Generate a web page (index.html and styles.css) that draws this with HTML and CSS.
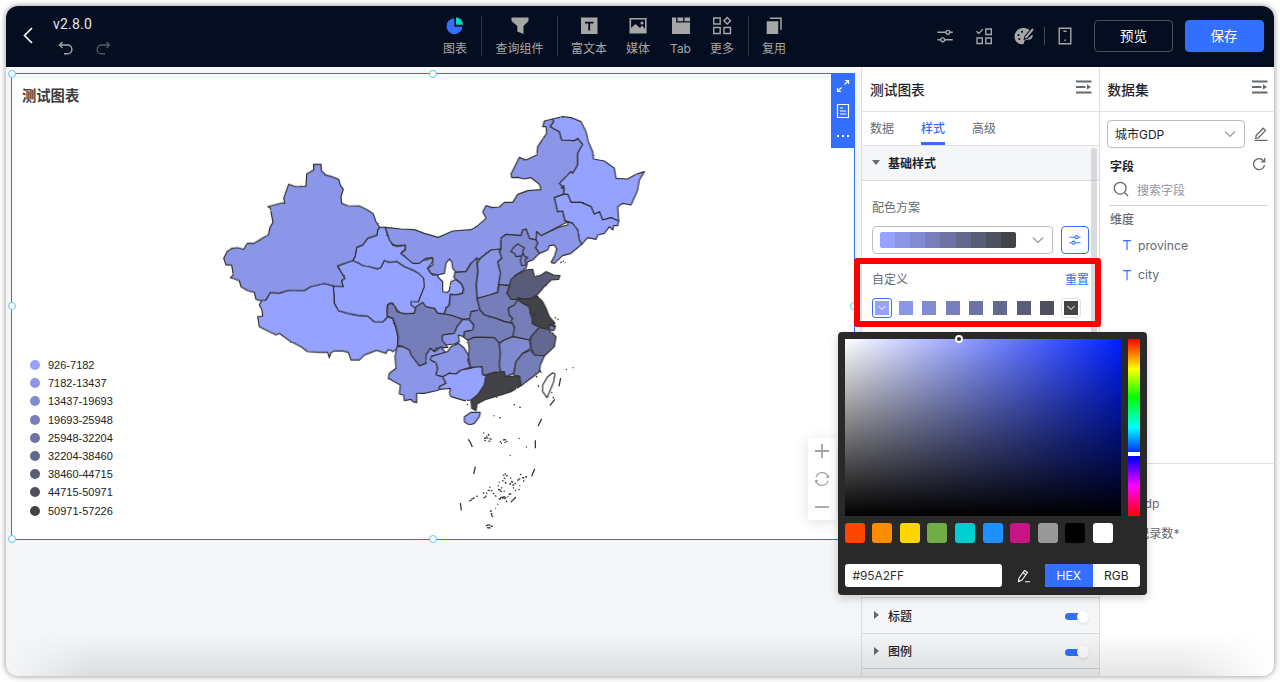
FILE: index.html
```html
<!DOCTYPE html>
<html lang="zh-CN">
<head>
<meta charset="utf-8">
<title>v2.8.0</title>
<link rel="stylesheet" href="styles.css">
</head>
<body>
<div class="window">
  <header class="topbar">
    <svg class="back" width="12" height="18" viewBox="0 0 12 18"><path d="M10 2 2.500 9.500 10 17"/></svg>
    <div class="file">
      <div class="file-name">v2.8.0</div>
      <div class="history">
        <svg width="16" height="15" viewBox="0 0 16 15"><path d="M4.500 1 1.500 4l3 3M2 4h7.500a4.200 4.200 0 0 1 0 8.800H6"/></svg>
        <svg class="dim" width="16" height="15" viewBox="0 0 16 15"><path d="M11.500 1l3 3-3 3M14 4H6.500a4.200 4.200 0 0 0 0 8.800H10"/></svg>
      </div>
    </div>
    <nav class="tools">
      <div class="tool w1"><svg width="20" height="20" viewBox="0 0 20 20"><path fill="#3370ff" d="M9.300 2.200a8 8 0 1 0 8.200 8.500H9.300z"/><path fill="#00d6b9" d="M11 1.200a7.500 7.500 0 0 1 7 7.600h-7z"/></svg><span>图表</span></div>
      <i class="sep"></i>
      <div class="tool w2"><svg width="20" height="20" viewBox="0 0 20 20"><path fill="#a6a6a6" d="M1.500 1.500h17v3.600l-5 5V18L7.300 15.600V10.100l-5.800-5z"/></svg><span>查询组件</span></div>
      <i class="sep"></i>
      <div class="tool w3"><svg width="20" height="20" viewBox="0 0 20 20"><path fill="#a6a6a6" d="M2 1.500h16.500V18H2z"/><path fill="none" stroke="#050e21" stroke-width="1.800" d="M6 6.700h8.500M10.200 6.500v8"/></svg><span>富文本</span></div>
      <div class="tool w4"><svg width="20" height="20" viewBox="0 0 20 20"><path fill="none" stroke="#a6a6a6" stroke-width="1.600" d="M2.300 2.800h15.500v14H2.300z"/><path fill="#a6a6a6" d="M3 12l4.500-4 4.500 4 2-2.500 3.500 4V17H3z"/><circle cx="14" cy="7" r="1.500" fill="#a6a6a6"/></svg><span>媒体</span></div>
      <div class="tool w5"><svg width="20" height="20" viewBox="0 0 20 20"><path fill="#a6a6a6" d="M1 1.500h4.200v5H19V18H1zM6.500 1.500h5.700v3.700H6.500zM13.500 1.500H19v3.700h-5.500z"/></svg><span>Tab</span></div>
      <div class="tool w6"><svg width="20" height="20" viewBox="0 0 20 20"><path fill="none" stroke="#a6a6a6" stroke-width="1.400" d="M1.700 2h6.500v6H1.700zM1.700 11.500h6.500v6H1.700zM12 11.500h6.500v6H12zM15.200 1.500l3.300 3.300-3.300 3.300-3.300-3.300z"/></svg><span>更多</span></div>
      <i class="sep"></i>
      <div class="tool w7"><svg width="20" height="20" viewBox="0 0 20 20"><path fill="#a6a6a6" d="M2.700 5.200h11.500V18H2.700z"/><path fill="none" stroke="#a6a6a6" stroke-width="1.500" d="M6 2.300h11v11.500"/></svg><span>复用</span></div>
    </nav>
    <div class="actions">
      <svg width="18" height="18" viewBox="0 0 18 18"><path d="M1.500 5.300h8.300M13.800 5.300h3M1.500 12.800h3.200M8.700 12.800h8"/><circle cx="11.800" cy="5.300" r="1.900"/><circle cx="6.700" cy="12.800" r="1.900"/></svg>
      <svg width="18" height="18" viewBox="0 0 18 18"><path d="M1.500 4.300l2.300 2.300 4-4.500M10.800 2h5.500v5.500h-5.500zM2 11h5.300v5.500H2zM10.800 11h5.500v5.500h-5.500z"/></svg>
      <svg width="20" height="18" viewBox="0 0 20 18"><path class="solid" d="M9 1C4.500 1 .5 4.800.5 9.500S4 17.300 8 17.300c2.500 0 2-2.200 2.500-3.500s3-.8 4.500-1.100c3-.5 4-2.700 3.500-5.200L13.500 12l-4 1 1-4L15.500 3C13.500 1.500 11 1 9 1z"/><path class="brush" d="M11.500 11l7.500-9"/><circle class="hole" cx="4.500" cy="8" r="1.100"/><circle class="hole" cx="8" cy="4.800" r="1.100"/><circle class="hole" cx="5.300" cy="12" r="1.100"/></svg>
      <i class="sep"></i>
      <svg width="16" height="18" viewBox="0 0 16 18"><path d="M2.200 1.300h11.600v15.500H2.200zM6.500 4.200h3M7.300 13.300h1.500"/></svg>
      <button class="btn ghost">预览</button>
      <button class="btn primary">保存</button>
    </div>
  </header>

  <main class="work">
    <section class="stage">
      <div class="chart">
        <h2 class="chart-title">测试图表</h2>
        <svg class="map" width="450" height="430" viewBox="0 0 1350 1290">
          <defs><filter id="coast" x="0" y="0" width="100%" height="100%"><feTurbulence type="fractalNoise" baseFrequency="0.200" numOctaves="2" seed="4"/><feDisplacementMap in="SourceGraphic" scale="5" xChannelSelector="R" yChannelSelector="G"/></filter></defs>
          <g class="land" filter="url(#coast)">
            <g transform="translate(480 405)">
              <path class="c1" d="M26-38 43-38 50-15 65 15 80 20 103 15 103 27 90 40 110 55 135 70 145 58 165 60 185 52 185 65 170 85 185 105 202 103 200 110 215 125 215 155 230 157 235 150 240 125 255 118 270 130 278 145 275 160 255 165 238 163 235 195 225 205 220 222 200 220 190 205 150 225 100 210 100 180 142 185 158 140 145 102 125 90 100 80 78 65 55 67 40 62 30 82 20 87-5 80-25 77-55 62-47 48-43 22-25 15-10-5 18-15 20-30z"/>
            </g>
            <g transform="translate(0 135)">
              <path class="c2" d="M308 43 330 43 331 62 345 75 360 79 383 88 388 105 397 118 390 140 392 160 410 167 445 168 470 180 487 192 495 215 506 232 500 240 498 255 470 265 455 285 437 292 433 318 425 332 380 348 390 365 402 385 392 392 397 410 367 408 340 401 300 410 280 422 230 422 205 430 178 428 165 450 150 452 135 448 130 427 110 422 90 410 85 392 58 383 67 375 62 345 45 345 38 325 48 305 62 295 80 293 98 298 108 280 128 280 173 253 177 232 186 217 177 172 170 170 215 158 222 160 218 145 233 103 255 110 285 108 287 72 308 60z"/>
              <path class="c1" d="M165 450 178 428 205 430 230 422 280 422 300 410 340 401 367 408 370 440 370 460 383 482 410 490 440 496 470 498 490 515 515 516 530 500 545 505 555 535 560 560 560 595 545 605 540 600 530 600 525 610 497 601 460 615 445 630 420 630 412 607 395 603 370 603 360 608 355 623 350 607 320 607 290 605 270 590 240 575 205 550 195 555 155 535 145 530 140 500 155 498 153 480 145 465 152 452z"/>
              <path class="c1" d="M425 332 445 340 455 347 475 350 500 357 510 352 520 332 535 337 558 335 580 350 605 360 625 372 638 385 640 410 628 440 622 455 600 455 600 465 615 475 610 490 590 492 570 490 558 480 545 460 530 463 528 480 530 500 515 516 490 515 470 498 440 496 410 490 383 482 370 460 370 440 367 408 397 410 392 392 402 385 390 365 380 348z"/>
            </g>
            <g transform="translate(510 0)">
              <path class="c2" d="M13 367 60 372 100 374 130 385 172 397 215 378 270 374 290 362 315 340 305 320 315 302 335 308 355 306 370 292 395 292 410 268 440 257 480 254 475 238 450 218 430 222 410 217 392 218 390 207 415 157 435 165 467 150 470 125 490 95 497 85 495 65 485 65 490 48 515 42 518 50 508 65 535 80 542 105 580 107 590 100 605 118 590 145 590 180 575 205 570 200 535 235 550 250 548 268 520 278 530 320 545 318 552 348 560 350 480 392 467 380 465 405 445 400 435 372 425 375 420 392 375 388 360 400 360 432 330 435 300 458 270 475 255 500 225 502 215 490 212 470 205 462 195 475 190 505 170 510 150 505 140 490 155 480 155 458 135 460 115 475 95 475 60 445 73 435 73 420 50 422 35 418 25 405z"/>
              <path class="c1" d="M515 42 545 35 570 38 600 50 615 80 622 110 635 140 637 162 670 168 700 190 705 220 740 222 765 208 790 200 775 225 770 255 750 300 725 295 710 305 713 348 690 338 665 345 655 320 640 328 630 305 600 292 570 292 560 268 548 268 550 250 535 235 570 200 575 205 590 180 590 145 605 118 590 100 580 107 542 105 535 80 508 65 518 50z"/>
              <path class="c1" d="M548 268 560 268 570 292 600 292 630 305 640 328 655 320 665 345 690 338 713 348 710 362 698 362 695 375 685 365 670 385 650 390 645 403 620 398 602 418 595 405 590 375 575 355 560 350 552 348 545 318 530 320 520 278z"/>
              <path class="c2" d="M560 350 575 355 590 375 595 405 602 418 570 445 545 452 520 475 510 472 520 455 527 432 520 420 505 422 500 435 475 445 463 428 470 415 465 405 467 380 480 392 530 368 560 360z"/>
              <path class="c3" d="M360 400 375 388 420 392 425 375 435 372 445 400 465 405 470 415 463 428 475 445 455 465 440 470 435 490 405 510 390 540 352 540 358 505 350 470 362 460 355 440 360 432z"/>
              <path class="c3" d="M410 417 430 428 425 440 428 452 405 455 400 445 390 440 398 427z"/>
              <path class="c3" d="M425 445 432 455 440 457 432 465 435 480 422 482 418 465z"/>
              <path class="c2" d="M300 458 330 435 360 432 355 440 362 460 350 470 358 505 352 540 350 562 325 572 288 582 285 540 290 500 288 475z"/>
              <path class="c8" d="M541 248 548 242 549 252z"/>
            </g>
            <g transform="translate(480 405)">
              <path class="c4" d="M50 195 60 188 72 200 78 215 100 222 130 220 135 200 155 187 165 200 190 205 200 220 240 225 270 235 275 238 258 260 250 280 215 285 213 300 225 315 230 322 195 325 190 335 178 325 165 345 165 370 145 378 120 345 115 330 95 320 80 315 82 290 75 260 65 235 48 228z"/>
              <path class="c3" d="M318 70 320 95 315 135 318 175 327 210 300 215 298 235 275 238 240 225 220 222 225 205 235 195 238 163 255 165 275 160 278 145 270 130 255 118 248 112 252 97 285 95 300 70 318 53z"/>
              <path class="c4" d="M318 175 355 165 380 157 385 133 415 138 408 160 440 178 430 195 412 205 415 225 425 235 425 250 400 245 375 235 340 225 327 210z"/>
              <path class="c7" d="M415 138 420 118 435 105 465 90 485 88 490 108 505 108 525 95 548 105 567 107 563 118 540 120 520 140 498 165 480 175 455 178 420 178 408 160z"/>
              <path class="c4" d="M440 180 455 190 475 200 478 220 485 240 483 250 505 262 495 275 480 290 475 300 440 293 425 290 430 260 420 245 425 235 415 225 412 205 430 195z"/>
              <path class="c9" d="M440 172 455 178 480 175 498 168 515 185 525 205 535 230 548 245 552 265 535 265 505 262 483 250 485 240 478 220 475 200 455 190z"/>
              <path class="c4" d="M535 252 552 262 548 272 535 268zM488 220l6 2-3 6z"/>
              <path class="c6" d="M505 262 530 268 545 280 555 290 550 320 520 348 490 345 480 325 478 305 480 290z"/>
              <path class="c4" d="M300 215 327 210 340 225 375 235 400 245 425 250 430 265 425 290 400 300 385 310 370 293 335 292 310 292 290 300 278 292 280 275 305 270 308 255 295 240z"/>
              <path class="c2" d="M275 238 295 240 308 255 305 270 280 275 278 290 262 285 265 305 250 312 225 315 213 300 215 285 250 280 258 260z"/>
              <path class="c2" d="M78 320 95 320 115 330 120 345 145 378 165 370 165 345 178 325 190 335 210 320 225 340 195 345 180 350 178 360 195 368 200 385 195 405 215 410 225 430 205 440 205 450 160 460 137 460 137 488 125 485 120 478 100 482 98 465 85 462 88 435 70 425 52 415 55 400 75 385 72 350z"/>
              <path class="c2" d="M195 345 230 335 240 320 262 310 280 325 295 350 290 360 298 382 270 390 255 402 235 400 215 410 195 405 200 385 195 368 178 360 180 350z"/>
              <path class="c1" d="M215 410 235 400 255 402 270 390 298 385 320 378 333 380 335 405 345 408 340 435 320 465 300 480 280 482 240 470 235 460 238 445 205 448 205 440 225 430z"/>
              <path class="c4" d="M290 300 310 292 335 292 370 293 385 310 388 340 385 375 390 400 370 397 350 405 335 402 333 380 298 382 292 350 295 325z"/>
              <path class="c3" d="M385 310 400 300 425 290 475 300 480 325 455 340 435 365 428 400 405 410 390 400 385 375 388 340z"/>
              <path class="c4" d="M455 340 480 330 490 345 520 348 508 375 505 395 480 415 450 437 445 410 428 405 435 365z"/>
              <path class="c9" d="M345 408 350 402 370 397 400 395 403 410 445 408 450 437 420 455 390 465 345 478 318 492 315 512 302 505 300 482 320 465 340 435z"/>
              <path class="c1" d="M300 517 328 517 325 530 310 550 295 555 280 545 280 530z"/>
              <path class="none" d="M545 398 552 402 548 425 540 445 528 473 515 455 515 435 530 410z"/>
            </g>
          </g>
          <g class="sea" transform="translate(690 765)">
            <path d="M359 54l-5 25M341 118l-14 19M302 176l-11 23M283 241v24M281 326l-9 23M225 411l-16 16M58 429l3 22M103 320l-5 22M82 238l6 9 6 14"/>
            <path class="isle" d="M375 27l2 3M395 23l3 0M291 76l3 5M331 97l3 2M335 111l4 4M218 133l4 2M235 140l4 3M157 167l3 1M175 172l4 3M78 132l2 3M233 235l3 1M255 260l3 2M206 286l3 1M341 -128l4 2M349 -123l4 1M338 -112l5 2M341 -103l4 3M295 30l6 8M285 48l4 4"/>
            <path class="isle" d="M127 218l3 2M142 222l2 5M129 236l8-3M138 232l4 4M146 236l6 2M130 242l5-1M142 243l6 1M136 228l3 0M177 247l3-4M186 240l9-1M196 243l3 3M180 250h3M190 247h4"/>
            <path class="isle" d="M186 345l4 2M192 340l2 4M195 348l5-2M188 354l5 2M173 366l3 1M183 362l5 1M193 366l2 5M170 377l4 1M180 383l4 1M207 354l4 1M210 364l6 3M205 373l5-3M214 376l6-2M221 370l4 1M216 382l3 3M229 361l5-2M233 356l5 1M243 353l7 1M253 349l5 3M246 362l4 2M237 343l4 1M235 377l3 1M222 391l3 1M232 388l4 1M171 388l9 3M178 394l5 1M188 392l3 3M145 380l3 3M140 390l6 3M149 393l5-2M126 400l4-2M136 398l3 3M127 414l6-2M133 410l4-3M156 400l4 2M162 406l4 4M106 407l4 3M85 424l7-5M91 417l8-2M97 414l4-1M173 418l7-3M178 413l8-2M184 416l5-4M187 409l5 2M190 417l6-5M195 422l3 4M203 404l8-3M199 409l3 1M169 433l3 0M163 445h2M147 455l5-3M149 460l5 3M151 466l5 4M135 498l8-4M144 494l4 3M149 500l7-2M138 503l10 1"/>
            <path class="isle" d="M365 -297l4 1M371 -292l2 1M363 -294l-5 2"/>
          </g>
        </svg>
        <ul class="legend">
          <li><i class="b1"></i>926-7182</li>
          <li><i class="b2"></i>7182-13437</li>
          <li><i class="b3"></i>13437-19693</li>
          <li><i class="b4"></i>19693-25948</li>
          <li><i class="b5"></i>25948-32204</li>
          <li><i class="b6"></i>32204-38460</li>
          <li><i class="b7"></i>38460-44715</li>
          <li><i class="b8"></i>44715-50971</li>
          <li><i class="b9"></i>50971-57226</li>
        </ul>
        <div class="zoomer">
          <svg width="16" height="16" viewBox="0 0 16 16"><path d="M8 1v14M1 8h14"/></svg>
          <svg width="16" height="16" viewBox="0 0 16 16"><path class="thin" d="M2 6.500A6.200 6.200 0 0 1 14 6M14 9.500A6.200 6.200 0 0 1 2 10M1.700 12v-2.300h2.300M14.300 4v2.300h-2.300"/></svg>
          <svg width="16" height="16" viewBox="0 0 16 16"><path d="M1 8h14"/></svg>
        </div>
        <div class="side-tools">
          <svg width="14" height="14" viewBox="0 0 14 14"><path d="M8.500 5.500 12.500 1.500M9 1.500h3.500V5M5.500 8.500 1.500 12.500M1.500 9v3.500H5"/></svg>
          <svg width="14" height="16" viewBox="0 0 14 16"><path d="M1.500 1.500h11v13h-11zM4 5h3M4 8h6M4 11h6"/></svg>
          <svg width="14" height="6" viewBox="0 0 14 6"><path class="dots" d="M1 2h2v2H1zM6 2h2v2H6zM11 2h2v2h-2z"/></svg>
        </div>
        <i class="handle tl"></i><i class="handle tc"></i><i class="handle tr"></i>
        <i class="handle ml"></i><i class="handle mr"></i>
        <i class="handle bl"></i><i class="handle bc"></i>
      </div>
    </section>

    <aside class="panel">
      <div class="panel-head"><span>测试图表</span>
        <svg width="16" height="14" viewBox="0 0 16 14"><path d="M0 1.500h15.500M0 7h9.500M0 12.500h15.500"/><path class="tip" d="M11 4.300v5.200L15 7z"/></svg></div>
      <div class="tabs"><span>数据</span><span class="on">样式</span><span>高级</span></div>
      <div class="panel-body">
        <div class="fold open"><i class="caret down"></i><b>基础样式</b></div>
        <div class="form">
          <label>配色方案</label>
          <div class="scheme">
            <div class="select">
              <div class="ramp"><i class="b1"></i><i class="b2"></i><i class="b3"></i><i class="b4"></i><i class="b5"></i><i class="b6"></i><i class="b7"></i><i class="b8"></i><i class="b9"></i></div>
              <svg class="chev" width="12" height="8" viewBox="0 0 12 8"><path d="M1 1.500 6 6.500l5-5"/></svg>
            </div>
            <div class="tune"><svg width="12" height="12" viewBox="0 0 12 12"><path d="M.500 3.200h5.300M9.200 3.200H11.500M.500 8.700h2.300M6.200 8.700h5.300"/><circle cx="7.500" cy="3.200" r="1.600"/><circle cx="4.500" cy="8.700" r="1.600"/></svg></div>
          </div>
          <div class="custom-head"><span>自定义</span><a>重置</a></div>
          <div class="swatches">
            <div class="sw picked"><i class="b1"><svg width="10" height="6" viewBox="0 0 10 6"><path d="M1.500 1 5 4.500 8.500 1"/></svg></i></div>
            <div class="sw"><i class="b2"></i></div><div class="sw"><i class="b3"></i></div><div class="sw"><i class="b4"></i></div><div class="sw"><i class="b5"></i></div><div class="sw"><i class="b6"></i></div><div class="sw"><i class="b7"></i></div><div class="sw"><i class="b8"></i></div>
            <div class="sw hover"><i class="b9"><svg width="10" height="6" viewBox="0 0 10 6"><path d="M1.500 1 5 4.500 8.500 1"/></svg></i></div>
          </div>
        </div>
        <div class="fold"><i class="caret"></i><b>标题</b><span class="toggle"></span></div>
        <div class="fold"><i class="caret"></i><b>图例</b><span class="toggle"></span></div>
        <div class="fold"></div>
        <i class="scrollbar"></i>
      </div>
    </aside>

    <aside class="dataset">
      <div class="panel-head"><span>数据集</span>
        <svg width="16" height="14" viewBox="0 0 16 14"><path d="M0 1.500h15.500M0 7h9.500M0 12.500h15.500"/><path class="tip" d="M11 4.300v5.200L15 7z"/></svg></div>
      <div class="ds-top">
        <div class="ds-pick">
          <div class="ds-select">城市GDP<svg class="chev" width="12" height="8" viewBox="0 0 12 8"><path d="M1 1.500 6 6.500l5-5"/></svg></div>
          <svg class="ico" width="14" height="14" viewBox="0 0 14 14"><path d="M2 8.700 9.200 1.300l2.300 2.300L4.300 10.800 1.800 11.200zM.500 13.300h13"/></svg>
        </div>
        <div class="fields"><b>字段</b><svg class="ico" width="14" height="14" viewBox="0 0 14 14"><path d="M11.700 4.200A5.500 5.500 0 1 0 12.500 8M12.700 1v3.800H9"/></svg></div>
        <div class="search"><svg class="ico" width="16" height="16" viewBox="0 0 16 16"><circle cx="7.200" cy="7.200" r="5.900"/><path d="M11.500 11.500 15 15"/></svg><span>搜索字段</span></div>
        <div class="group">维度</div>
        <div class="field"><svg width="10" height="12" viewBox="0 0 10 12"><path d="M1 1.700h8M5 1.700v9.500"/></svg>province</div>
        <div class="field"><svg width="10" height="12" viewBox="0 0 10 12"><path d="M1 1.700h8M5 1.700v9.500"/></svg>city</div>
      </div>
      <div class="ds-bottom">
        <div class="field measure">gdp</div>
        <div class="field measure">记录数*</div>
      </div>
    </aside>
  </main>
  <div class="fade"></div>
</div>

<div class="callout"></div>

<div class="picker">
  <div class="picker-main">
    <div class="sv"><i class="knob"></i></div>
    <div class="hue"><i class="hue-thumb"></i></div>
  </div>
  <div class="presets"><i class="p1"></i><i class="p2"></i><i class="p3"></i><i class="p4"></i><i class="p5"></i><i class="p6"></i><i class="p7"></i><i class="p8"></i><i class="p9"></i><i class="p10"></i></div>
  <div class="picker-foot">
    <div class="hex">#95A2FF</div>
    <svg width="14" height="14" viewBox="0 0 14 14"><path d="M2 9 7.500 1.500l3 2L5 11 1.500 12.500zM5.800 3.500l3 2.300M8 12.700h5"/></svg>
    <div class="mode"><span class="on">HEX</span><span>RGB</span></div>
  </div>
</div>
</body>
</html>
```
FILE: styles.css
```css
* { box-sizing: border-box; }
body { margin: 0; width: 1280px; height: 682px; overflow: hidden; background: #fff; padding: 6px; font-family: Inter, "Noto Sans CJK SC", sans-serif; font-size: 12px; color: #1f2329; }
i { display: block; font-style: normal; }
svg { display: block; flex: none; }
.window { position: relative; width: 1268px; height: 670px; border-radius: 12px; overflow: hidden; background: #f5f6f7; box-shadow: 0 0 6px rgba(0,0,0,.45); display: flex; flex-direction: column; }

/* top bar */
.topbar { height: 61px; flex: none; background: #050e21; display: flex; color: #a6a6a6; }
.back { margin: 20px 0 0 16px; fill: none; stroke: #fff; stroke-width: 1.6; }
.file { width: 395px; flex: none; padding: 9px 0 0 19px; }
.file-name { font-family: Roboto, sans-serif; font-size: 14px; line-height: 18px; color: #e6e6e8; letter-spacing: .2px; }
.history { display: flex; gap: 21px; padding: 8px 0 0 5px; }
.history svg { fill: none; stroke: #a6a6a6; stroke-width: 1.4; }
.history .dim { stroke: #55585e; }
.tools { display: flex; height: 61px; width: 370px; flex: none; }
.tool { display: flex; flex-direction: column; align-items: center; padding-top: 10px; flex: none; }
.tool span { font-size: 12px; line-height: 16px; margin-top: 5px; white-space: nowrap; }
.w1 { width: 52px; } .w2 { width: 75px; } .w3 { width: 62px; } .w4 { width: 36px; } .w5 { width: 49px; } .w6 { width: 34px; margin-right: 9px; } .w7 { width: 50px; }
.tools .sep { width: 1px; height: 40px; margin-top: 10px; background: #2d3444; }
.actions { display: flex; align-items: center; height: 59px; margin-left: 137px; color: #a6a6a6; }
.actions svg { fill: none; stroke: #a6a6a6; stroke-width: 1.4; margin-right: 21px; }
.actions svg:nth-of-type(3) { margin-right: 10px; }
.actions svg .solid { fill: #a6a6a6; stroke: none; }
.actions svg .brush { stroke-width: 2; }
.actions svg .hole { fill: #050e21; stroke: none; }
.actions .sep { width: 1px; height: 18px; background: #3f4553; margin-right: 12px; }
.btn { width: 79px; height: 32px; border-radius: 4px; font: 13.5px/20px Inter, "Noto Sans CJK SC", sans-serif; color: #fff; padding: 0; border: 1px solid #3370ff; background: #3370ff; margin-left: 11.5px; }
.btn.ghost { background: transparent; border-color: #4b505c; margin-left: 0; }

/* canvas */
.work { display: flex; flex: 1; min-height: 0; }
.stage { width: 855px; padding: 5px 0 0 5px; flex: none; border-top: 1px solid #fff; }
.chart { position: relative; width: 844px; height: 467px; background: #fff; border: 1px solid #3370ff; }
.chart-title { margin: 0; padding: 11px 0 0 10px; font-size: 14.3px; line-height: 22px; font-weight: 700; color: #3d3d3d; }
.map { position: absolute; left: 198.500px; top: 31px; }
.land path { stroke: #333; stroke-width: 3.6; stroke-linejoin: round; }
.c1 { fill: #95a2ff; } .c2 { fill: #8b96e8; } .c3 { fill: #808ad0; } .c4 { fill: #757eb9; } .c6 { fill: #62678f; } .c7 { fill: #585c78; } .c8 { fill: #4d505f; } .c9 { fill: #424348; } .none { fill: #fff; }
.sea path { fill: none; stroke: #333; stroke-width: 3.8; }
.b1 { background: #95a2ff; } .b2 { background: #8b96e8; } .b3 { background: #818bd1; } .b4 { background: #777fba; } .b5 { background: #6d73a5; } .b6 { background: #63688e; } .b7 { background: #585c77; } .b8 { background: #4e5060; } .b9 { background: #444448; }
.legend { position: absolute; left: 17px; top: 282px; margin: 0; padding: 0; list-style: none; font: 11px/18.2px "Liberation Sans", Arial, sans-serif; color: #222; }
.legend li { display: flex; align-items: center; gap: 8px; height: 18.2px; }
.legend i { width: 10px; height: 10px; border-radius: 50%; margin-left: 1px; }
.zoomer { position: absolute; left: 796px; top: 364px; width: 28px; height: 82px; background: #fff; box-shadow: 0 2px 14px rgba(0,0,0,.13); display: flex; flex-direction: column; align-items: center; justify-content: space-between; padding: 5px 0; }
.zoomer path { fill: none; stroke: #a2a2a2; stroke-width: 1.8; }
.zoomer .thin { stroke-width: 1.2; }
.side-tools { position: absolute; right: -1px; top: -1px; width: 24px; height: 75px; background: #3370ff; display: flex; flex-direction: column; align-items: center; padding-top: 6px; gap: 10px; }
.side-tools path { fill: none; stroke: #fff; stroke-width: 1.2; }
.side-tools svg:last-child { margin-top: 4px; }
.side-tools .dots { fill: #fff; stroke: none; }
.handle { position: absolute; width: 8px; height: 8px; border-radius: 50%; border: 1px solid #59c7f9; background: #fff; }
.tl { left: -4px; top: -4px; } .tc { left: 417px; top: -4px; } .tr { right: -4px; top: -4px; z-index: -1; }
.ml { left: -4px; top: 228px; } .mr { right: -4px; top: 228px; } .bl { left: -4px; bottom: -4px; } .bc { left: 417px; bottom: -4px; }

/* style panel */
.panel { width: 239px; flex: none; background: #fff; border-left: 1px solid #dee0e3; border-right: 1px solid #dee0e3; display: flex; flex-direction: column; }
.panel-head { height: 45px; flex: none; border-bottom: 1px solid #dee0e3; display: flex; justify-content: space-between; padding: 0 7px 0 8px; font-size: 13.700px; font-weight: 500; line-height: 46px; }
.panel-head svg { margin-top: 13px; fill: none; stroke: #646a73; stroke-width: 1.8; }
.panel-head .tip { fill: #646a73; stroke: none; }
.tabs { height: 34px; flex: none; display: flex; gap: 27px; padding-left: 8px; border-bottom: 1px solid #dee0e3; line-height: 34px; color: #646a73; }
.tabs span { height: 33px; }
.tabs .on { color: #3370ff; font-weight: 500; border-bottom: 3px solid #3370ff; }
.panel-body { position: relative; flex: 1; min-height: 0; overflow: hidden; }
.fold { height: 35.500px; background: #f5f6f7; border-bottom: 1px solid #d5d7da; display: flex; align-items: center; padding: 0 11px 0 11px; }
.fold b { font-weight: 500; margin-left: 9px; }
.fold.open { height: 35px; padding-bottom: 1px; }
.fold.open b { margin-left: 8px; font-weight: 600; }
.caret { border: 4px solid transparent; border-left: 5px solid #646a73; border-right: 0; margin-left: 1px; }
.caret.down { border: 4px solid transparent; border-top: 5px solid #646a73; border-bottom: 0; margin-left: -1px; }
.toggle { position: relative; width: 23px; height: 7px; border-radius: 4px; background: #3370ff; margin: 3px 0 0 auto; }
.toggle::after { content: ""; position: absolute; right: -1px; top: -2.500px; width: 12px; height: 12px; border-radius: 50%; background: #fff; box-shadow: 0 1px 3px rgba(0,0,0,.12); }
.form { height: 417px; padding: 19px 10px 0 10px; border-bottom: 1px solid #d5d7da; color: #646a73; }
.form label { display: block; line-height: 16px; }
.scheme { display: flex; justify-content: space-between; padding-top: 10px; }
.select { width: 181px; height: 28px; border: 1px solid #bbbfc4; border-radius: 4px; display: flex; align-items: center; justify-content: space-between; padding: 0 8px 0 7px; }
.ramp { display: flex; width: 136px; height: 16px; border-radius: 2px; overflow: hidden; }
.ramp i { flex: 1; }
.chev { fill: none; stroke: #8f959e; stroke-width: 1.1; }
.tune { width: 28px; height: 28px; border: 1px solid #3370ff; border-radius: 4px; display: flex; align-items: center; justify-content: center; }
.tune svg { fill: none; stroke: #3370ff; stroke-width: 1.1; }
.custom-head { display: flex; justify-content: space-between; line-height: 16px; padding-top: 18px; }
.custom-head a { color: #3370ff; }
.swatches { display: flex; gap: 3.620px; padding-top: 10px; }
.sw { width: 20px; height: 20px; padding: 2px; border: 1px solid transparent; border-radius: 3px; flex: none; }
.sw i { width: 14px; height: 14px; display: flex; align-items: center; justify-content: center; }
.sw path { fill: none; stroke: #fff; stroke-width: 1; }
.sw.picked { border-color: #3370ff; }
.sw.hover { border-color: #dee0e3; }
.scrollbar { position: absolute; right: 2px; top: 2px; width: 6px; height: 300px; border-radius: 3px; background: rgba(187,191,196,.55); }

/* dataset panel */
.dataset { flex: 1; background: #fff; }
.dataset .panel-head { padding-right: 6px; padding-left: 7.500px; }
.ds-top { height: 352px; border-bottom: 1px solid #dee0e3; padding: 7.500px 6px 0 7px; }
.ds-pick { display: flex; justify-content: space-between; align-items: center; }
.ds-select { width: 138px; height: 28px; border: 1px solid #bbbfc4; border-radius: 4px; display: flex; align-items: center; justify-content: space-between; padding: 0 8px 0 7px; }
.ico { fill: none; stroke: #646a73; stroke-width: 1.3; }
.fields { display: flex; justify-content: space-between; align-items: center; height: 17px; margin: 9px 2px 0 3px; }
.fields b { font-weight: 600; }
.fields .ico { margin-top: -3px; }
.search { height: 32px; border-bottom: 1px solid #d0d3d6; display: flex; align-items: center; gap: 8px; margin: 0 0 0 2px; padding-left: 4px; color: #8f959e; }
.group { font-weight: 500; color: #646a73; line-height: 16px; margin: 6px 0 0 3px; }
.field { display: flex; align-items: center; height: 29.500px; padding-left: 15px; gap: 6px; color: #646a73; font-size: 12.200px; }
.group + .field { margin-top: 3px; }
.field path { fill: none; stroke: #3370ff; stroke-width: 1.2; }
.ds-bottom { padding: 25px 0 0 22px; }
.fade { position: absolute; left: 0; right: 0; bottom: 0; height: 44px; background: linear-gradient(rgba(0,0,0,0), rgba(0,0,0,.1)); mask-image: linear-gradient(90deg, transparent, #000 7%, #000 93%, transparent); }

/* highlight frame */
.callout { position: absolute; left: 854px; top: 258px; width: 247px; height: 69px; border: 6px solid #f00; border-radius: 3px; }

/* colour picker */
.picker { position: absolute; left: 838px; top: 332px; width: 309px; height: 263px; border-radius: 4px; background: #292929; box-shadow: 0 3px 10px rgba(0,0,0,.2); padding: 6.500px 7px 7px 6.500px; }
.picker-main { display: flex; justify-content: space-between; height: 177px; }
.sv { position: relative; width: 276px; background: linear-gradient(to top, #000, transparent), linear-gradient(to right, #fff, #0020ff); }
.knob { position: absolute; left: 110px; top: -4px; width: 8px; height: 8px; border: 2px solid #fff; border-radius: 50%; background: #333; }
.hue { position: relative; width: 12px; background: linear-gradient(#f00 0, #ff0 17%, #0f0 33%, #0ff 50%, #00f 67%, #f0f 83%, #f00 100%); }
.hue-thumb { position: absolute; left: 0; top: 113px; width: 12px; height: 4px; background: #fff; }
.presets { display: flex; gap: 7.620px; padding-top: 7.500px; }
.presets i { width: 20px; height: 20px; border-radius: 3px; flex: none; }
.p1 { background: #ff4500; } .p2 { background: #ff8c00; } .p3 { background: #ffd700; } .p4 { background: #70ad47; } .p5 { background: #00ced1; } .p6 { background: #1e90ff; } .p7 { background: #c71585; } .p8 { background: #999; } .p9 { background: #000; } .p10 { background: #fff; }
.picker-foot { display: flex; align-items: center; padding-top: 21px; }
.hex { width: 157px; height: 23px; border-radius: 3px; background: #fff; line-height: 23px; padding-left: 8px; color: #333; letter-spacing: -.1px; }
.picker-foot svg { margin-left: 15px; fill: none; stroke: #fff; stroke-width: 1.1; }
.mode { display: flex; width: 95px; height: 23px; margin-left: auto; border-radius: 3px; overflow: hidden; background: #fff; line-height: 23px; text-align: center; }
.mode span { flex: 1; }
.mode .on { background: #3370ff; color: #fff; }
```
